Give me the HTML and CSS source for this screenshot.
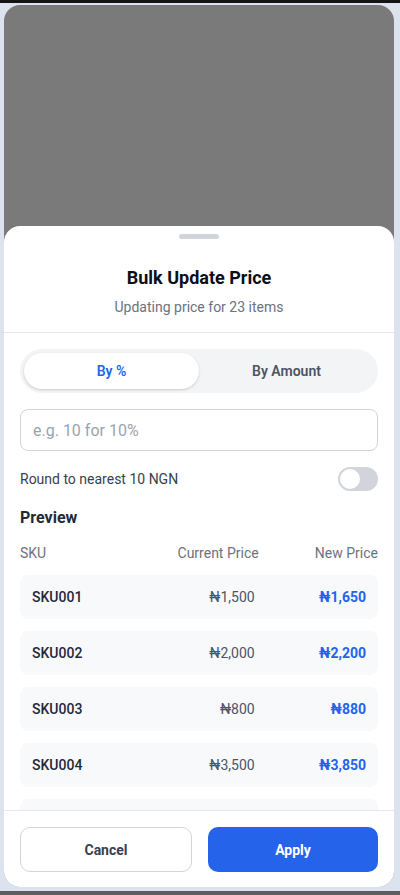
FILE: index.html
```html
<!DOCTYPE html>
<html lang="en">
<head>
<meta charset="utf-8">
<title>Bulk Update Price</title>
<link rel="stylesheet" href="styles.css">
</head>
<body>
<div class="topbar"></div>
<div class="frame">
  <div class="backdrop"></div>
  <div class="sheet">
    <div class="handle"></div>
    <div class="sheet-header">
      <h1 class="title">Bulk Update Price</h1>
      <p class="subtitle">Updating price for 23 items</p>
    </div>
    <div class="sheet-body">
      <div class="segmented">
        <button class="seg seg-active">By %</button>
        <button class="seg">By Amount</button>
      </div>
      <input class="amount-input" type="text" placeholder="e.g. 10 for 10%">
      <div class="round-row">
        <span class="round-label">Round to nearest 10 NGN</span>
        <span class="toggle"><span class="knob"></span></span>
      </div>
      <h2 class="preview-title">Preview</h2>
      <div class="table-head">
        <span class="col">SKU</span>
        <span class="col col-right">Current Price</span>
        <span class="col col-right">New Price</span>
      </div>
      <div class="rows">
        <div class="row"><span class="col sku">SKU001</span><span class="col col-right cur">₦1,500</span><span class="col col-right new">₦1,650</span></div>
        <div class="row"><span class="col sku">SKU002</span><span class="col col-right cur">₦2,000</span><span class="col col-right new">₦2,200</span></div>
        <div class="row"><span class="col sku">SKU003</span><span class="col col-right cur">₦800</span><span class="col col-right new">₦880</span></div>
        <div class="row"><span class="col sku">SKU004</span><span class="col col-right cur">₦3,500</span><span class="col col-right new">₦3,850</span></div>
        <div class="row row-peek" aria-hidden="true"></div>
      </div>
    </div>
    <div class="sheet-footer">
      <button class="btn btn-cancel">Cancel</button>
      <button class="btn btn-apply">Apply</button>
    </div>
  </div>
</div>
<div class="bottombar"></div>
</body>
</html>
```
FILE: styles.css
```css
* { box-sizing: border-box; }
html, body { margin: 0; padding: 0; }
body {
  width: 400px;
  height: 895px;
  background: #dde3ee;
  font-family: Roboto, "Noto Sans", "Liberation Sans", sans-serif;
  overflow: hidden;
  display: flex;
  flex-direction: column;
}
.topbar { height: 3px; background: #141414; flex: none; }
.frame {
  flex: none;
  margin: 2px 6px 0 4px;
  height: 882px;
  border-radius: 16px;
  overflow: hidden;
  background: #7a7a7a;
  display: flex;
  flex-direction: column;
}
.bottombar { margin-top: auto; height: 4px; background: #5e5e5e; flex: none; }
.backdrop { flex: 1; }
.sheet {
  flex: none;
  height: 661px;
  background: #ffffff;
  border-radius: 16px 16px 0 0;
  display: flex;
  flex-direction: column;
}
.handle {
  width: 40px;
  height: 5px;
  border-radius: 3px;
  background: #d1d5db;
  margin: 8px auto 0;
  flex: none;
}
.sheet-header {
  text-align: center;
  padding: 27px 16px 15px;
  border-bottom: 1px solid #e5e7eb;
  flex: none;
}
.title {
  margin: 0;
  font-size: 18px;
  line-height: 24px;
  font-weight: 700;
  color: #0b0f19;
}
.subtitle {
  margin: 7px 0 0;
  font-size: 14px;
  line-height: 20px;
  color: #6b7280;
}
.sheet-body {
  flex: 1;
  overflow: hidden;
  padding: 16px 16px 0;
  display: flex;
  flex-direction: column;
}
.segmented {
  display: flex;
  background: #f3f4f6;
  border-radius: 22px;
  padding: 4px;
  height: 44px;
  flex: none;
}
.seg {
  flex: 1;
  border: 0;
  background: transparent;
  border-radius: 18px;
  font-family: inherit;
  font-size: 14px;
  font-weight: 600;
  color: #4b5563;
}
.seg-active {
  background: #ffffff;
  color: #2563eb;
  box-shadow: 0 1px 3px rgba(0,0,0,0.12), 0 1px 2px rgba(0,0,0,0.06);
}
.amount-input {
  margin-top: 16px;
  height: 42px;
  border: 1px solid #d1d5db;
  border-radius: 8px;
  padding: 0 12px;
  font-family: inherit;
  font-size: 16px;
  color: #111827;
  outline: none;
  flex: none;
}
.amount-input::placeholder { color: #9ca3af; }
.round-row {
  margin-top: 16px;
  display: flex;
  align-items: center;
  justify-content: space-between;
  height: 24px;
  flex: none;
}
.round-label { font-size: 14px; color: #374151; }
.toggle {
  width: 40px;
  height: 24px;
  border-radius: 12px;
  background: #d1d5db;
  padding: 2px;
  display: flex;
}
.knob {
  width: 20px;
  height: 20px;
  border-radius: 50%;
  background: #ffffff;
}
.preview-title {
  margin: 15px 0 0;
  font-size: 16px;
  line-height: 24px;
  font-weight: 700;
  color: #1f2937;
  flex: none;
}
.table-head {
  display: flex;
  margin-top: 13px;
  font-size: 14px;
  line-height: 20px;
  color: #6b7280;
  flex: none;
}
.col { flex: 1; }
.col-right { text-align: right; }
.rows {
  margin-top: 12px;
  display: flex;
  flex-direction: column;
  gap: 12px;
}
.row {
  display: flex;
  align-items: center;
  height: 44px;
  padding: 0 12px;
  background: #f8f9fb;
  border-radius: 8px;
  font-size: 14px;
  flex: none;
}
.sku { font-weight: 500; color: #1f2937; }
.cur { color: #4b5563; }
.new { color: #2563eb; font-weight: 700; }
.sheet-footer {
  flex: none;
  border-top: 1px solid #e5e7eb;
  padding: 16px 16px 15px;
  display: flex;
  gap: 16px;
}
.btn {
  flex: 1;
  height: 45px;
  border-radius: 10px;
  font-family: inherit;
  font-size: 14px;
  font-weight: 700;
}
.btn-cancel {
  background: #ffffff;
  border: 1px solid #d1d5db;
  color: #374151;
}
.btn-apply {
  background: #2563eb;
  border: 0;
  color: #ffffff;
}
```
